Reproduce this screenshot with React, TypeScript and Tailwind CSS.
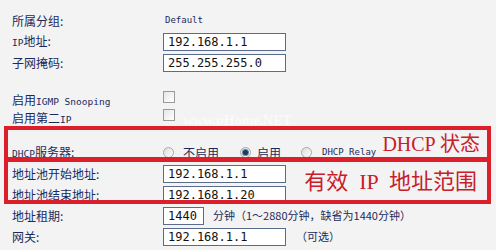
const mono = "font-['DejaVu_Sans_Mono',monospace]";

const Field = ({ value, w = 'w-[123px]' }: { value: string; w?: string }) => (
  <div
    className={`${w} h-[18px] bg-white border border-[#5b6b8c] flex items-center pl-[4px] ${mono} text-[12px] text-[#111]`}
  >
    {value}
  </div>
);

const Row = ({ label, children }: { label: React.ReactNode; children?: React.ReactNode }) => (
  <div className="flex items-center h-[21px]">
    <div className="w-[151px] shrink-0 text-[12px] leading-none">{label}</div>
    <div className="flex items-center">{children}</div>
  </div>
);

const Latin = ({ children }: { children: React.ReactNode }) => (
  <span className={`${mono} text-[9.5px]`}>{children}</span>
);

const Checkbox = () => (
  <span className="w-[12px] h-[12px] mb-[6px] border border-[#9a9a9a] bg-gradient-to-br from-[#e6e6e6] to-white" />
);

const Radio = ({ checked = false }: { checked?: boolean }) => (
  <span className="w-[11px] h-[11px] rounded-full border border-[#a9a9a9] bg-gradient-to-br from-[#dcdcdc] to-white flex items-center justify-center">
    {checked && <span className="w-[5px] h-[5px] rounded-full bg-[#1d3c5c] ring-1 ring-[#5d87a8]" />}
  </span>
);

export default function App() {
  return (
    <div className="w-[496px] h-[250px] bg-[#f3f3f3] relative overflow-hidden text-[#1b2a5a] font-['Noto_Sans_CJK_SC',sans-serif]">
      <div className="pt-[10px] pl-3">
        <Row label="所属分组:">
          <span className={`${mono} text-[9px] pl-[2px]`}>Default</span>
        </Row>
        <Row label={<><Latin>IP</Latin>地址:</>}>
          <Field value="192.168.1.1" />
        </Row>
        <Row label="子网掩码:">
          <Field value="255.255.255.0" />
        </Row>

        <div className="h-[18px]" />
        <div className="flex items-center h-[18px]">
          <div className="w-[151px] shrink-0 text-[12px] leading-none">
            启用<Latin>IGMP Snooping</Latin>
          </div>
          <Checkbox />
        </div>
        <div className="flex items-center h-[18px]">
          <div className="w-[151px] shrink-0 text-[12px] leading-none">
            启用第二<Latin>IP</Latin>
          </div>
          <Checkbox />
        </div>

        <div className="h-[15px]" />
        <Row label={<><Latin>DHCP</Latin>服务器:</>}>
          <div className="flex items-center text-[12px] leading-none">
            <Radio />
            <span className="ml-[9px]">不启用</span>
            <span className="ml-[21px]"><Radio checked /></span>
            <span className="ml-[6px]">启用</span>
            <span className="ml-[20px]"><Radio /></span>
            <span className={`ml-[10px] ${mono} text-[9px]`}>DHCP Relay</span>
          </div>
        </Row>
        <Row label="地址池开始地址:">
          <Field value="192.168.1.1" />
        </Row>
        <Row label="地址池结束地址:">
          <Field value="192.168.1.20" />
        </Row>
        <Row label="地址租期:">
          <Field value="1440" w="w-[41px]" />
          <span className="ml-[9px] text-[11px] leading-none">
            分钟（1～2880分钟，缺省为1440分钟）
          </span>
        </Row>
        <Row label="网关:">
          <Field value="192.168.1.1" />
          <span className="ml-[10px] text-[11px] leading-none">（可选）</span>
        </Row>
      </div>

      {/* watermark */}
      <span className="absolute left-[183px] top-[110px] text-[14px] font-bold text-white/60 font-['Liberation_Serif',serif] pointer-events-none">
        www.pHome.NET
      </span>

      {/* annotation boxes */}
      <div className="absolute left-[4px] top-[126px] w-[487px] h-[36px] border-4 border-[#dc1f2b] pointer-events-none">
        <span className="absolute right-[7px] top-[4px] text-[20px] leading-[20px] text-[#c8202a] font-['Liberation_Serif','Noto_Sans_CJK_SC',serif] whitespace-pre">
          DHCP 状态
        </span>
      </div>
      <div className="absolute left-[4px] top-[157px] w-[487px] h-[47px] border-4 border-[#dc1f2b] pointer-events-none">
        <span className="absolute right-[10px] top-[10px] text-[22px] leading-[22px] text-[#c8202a] font-['Liberation_Serif','Noto_Sans_CJK_SC',serif] whitespace-pre">
          有效  IP  地址范围
        </span>
      </div>
    </div>
  );
}
